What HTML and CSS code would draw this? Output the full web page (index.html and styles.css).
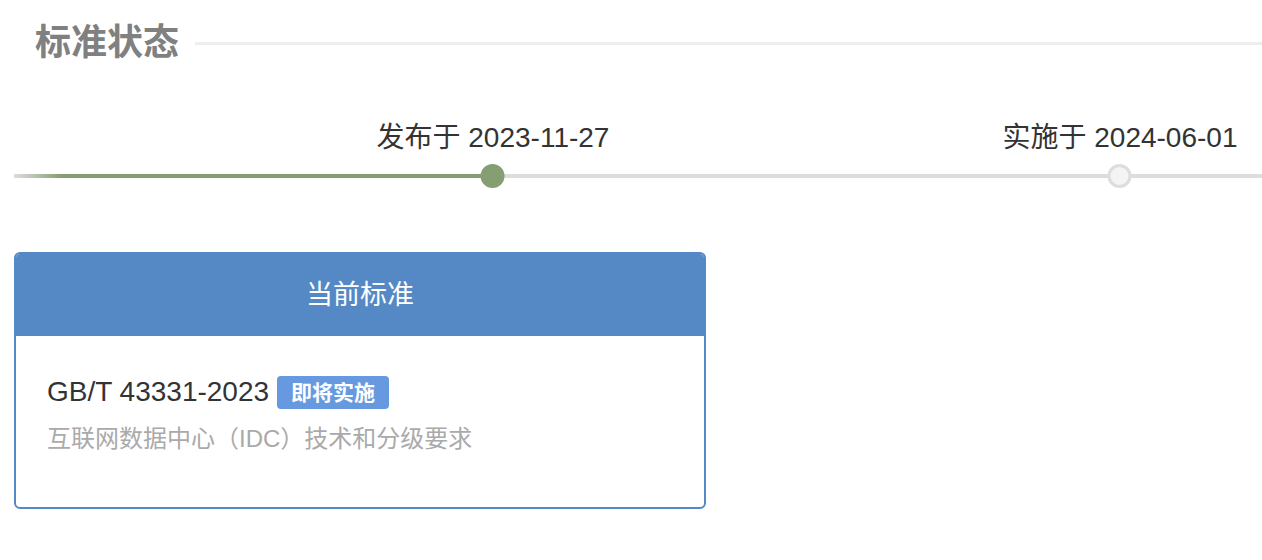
FILE: index.html
```html
<!DOCTYPE html>
<html lang="zh-CN">
<head>
  <meta charset="UTF-8" />
  <title>标准状态</title>
  <link rel="stylesheet" href="styles.css">
</head>
<body>

<div class="page">
  <div class="section-title">
    <h2>标准状态</h2>
    <span class="rule"></span>
  </div>

  <div class="timeline">
    <div class="track"><div class="progress" style="width: 38.38%"></div></div>
    <div class="point done" style="left: 38.38%">
      <span class="label">发布于 2023-11-27</span>
      <span class="dot"></span>
    </div>
    <div class="point" style="left: 88.62%">
      <span class="label">实施于 2024-06-01</span>
      <span class="dot"></span>
    </div>
  </div>

  <div class="card">
    <div class="card-head">当前标准</div>
    <div class="card-body">
      <div class="std-row">
        <span class="std-no">GB/T 43331-2023</span>
        <span class="badge">即将实施</span>
      </div>
      <div class="std-name">互联网数据中心（IDC）技术和分级要求</div>
    </div>
  </div>
</div>

</body>
</html>
```

FILE: styles.css
```css
* { box-sizing: border-box; }
html, body {
  margin: 0;
  padding: 0;
  background: #ffffff;
  font-family: "Liberation Sans", "Noto Sans CJK SC", sans-serif;
  color: #333;
}

.page {
  padding: 23px 0 0 14px;
}

/* 标题 */
.section-title {
  display: flex;
  align-items: center;
  padding-left: 21px;
}

.section-title h2 {
  margin: 0;
  font-size: 36px;
  line-height: 40px;
  font-weight: bold;
  color: #808080;
}

.section-title .rule {
  flex: 1;
  height: 3px;
  margin-left: 16px;
  background: #eeeeee;
}

/* 时间轴 */
.timeline {
  position: relative;
  height: 90px;
  margin-top: 47px;
}

.track {
  position: absolute;
  left: 0;
  right: 0;
  top: 64px;
  height: 4px;
  background: #dddddd;
}

.progress {
  height: 100%;
  background: linear-gradient(to right, rgba(133, 158, 114, 0) 0, #859e72 48px);
}

.point {
  position: absolute;
  top: 12px;
  display: flex;
  flex-direction: column;
  align-items: center;
  transform: translateX(-50%);
}

.point .label {
  font-size: 28px;
  line-height: 32px;
  white-space: nowrap;
  color: #333;
}

.point .dot {
  width: 24px;
  height: 24px;
  margin-top: 10px;
  border-radius: 50%;
  border: 3px solid #dddddd;
  background: #f4f4f4;
}

.point.done .dot {
  border-color: #859e72;
  background: #859e72;
}

/* 卡片 */
.card {
  width: 692px;
  margin-top: 52px;
  border: 2px solid #5589c6;
  border-radius: 6px;
  overflow: hidden;
}

.card-head {
  height: 82px;
  line-height: 82px;
  text-align: center;
  background: #5589c6;
  color: #fff;
  font-size: 27px;
}

.card-body {
  height: 171px;
  padding: 39px 30px 0 31px;
}

.std-row {
  display: flex;
  align-items: center;
  gap: 8px;
  height: 34px;
}

.std-no {
  font-size: 28px;
  color: #333;
}

.badge {
  padding: 0 14px;
  line-height: 33px;
  border-radius: 4px;
  background: #6699e0;
  color: #fff;
  font-size: 21px;
  font-weight: bold;
}

.std-name {
  margin-top: 15px;
  font-size: 24px;
  line-height: 30px;
  color: #aaaaaa;
}
```
